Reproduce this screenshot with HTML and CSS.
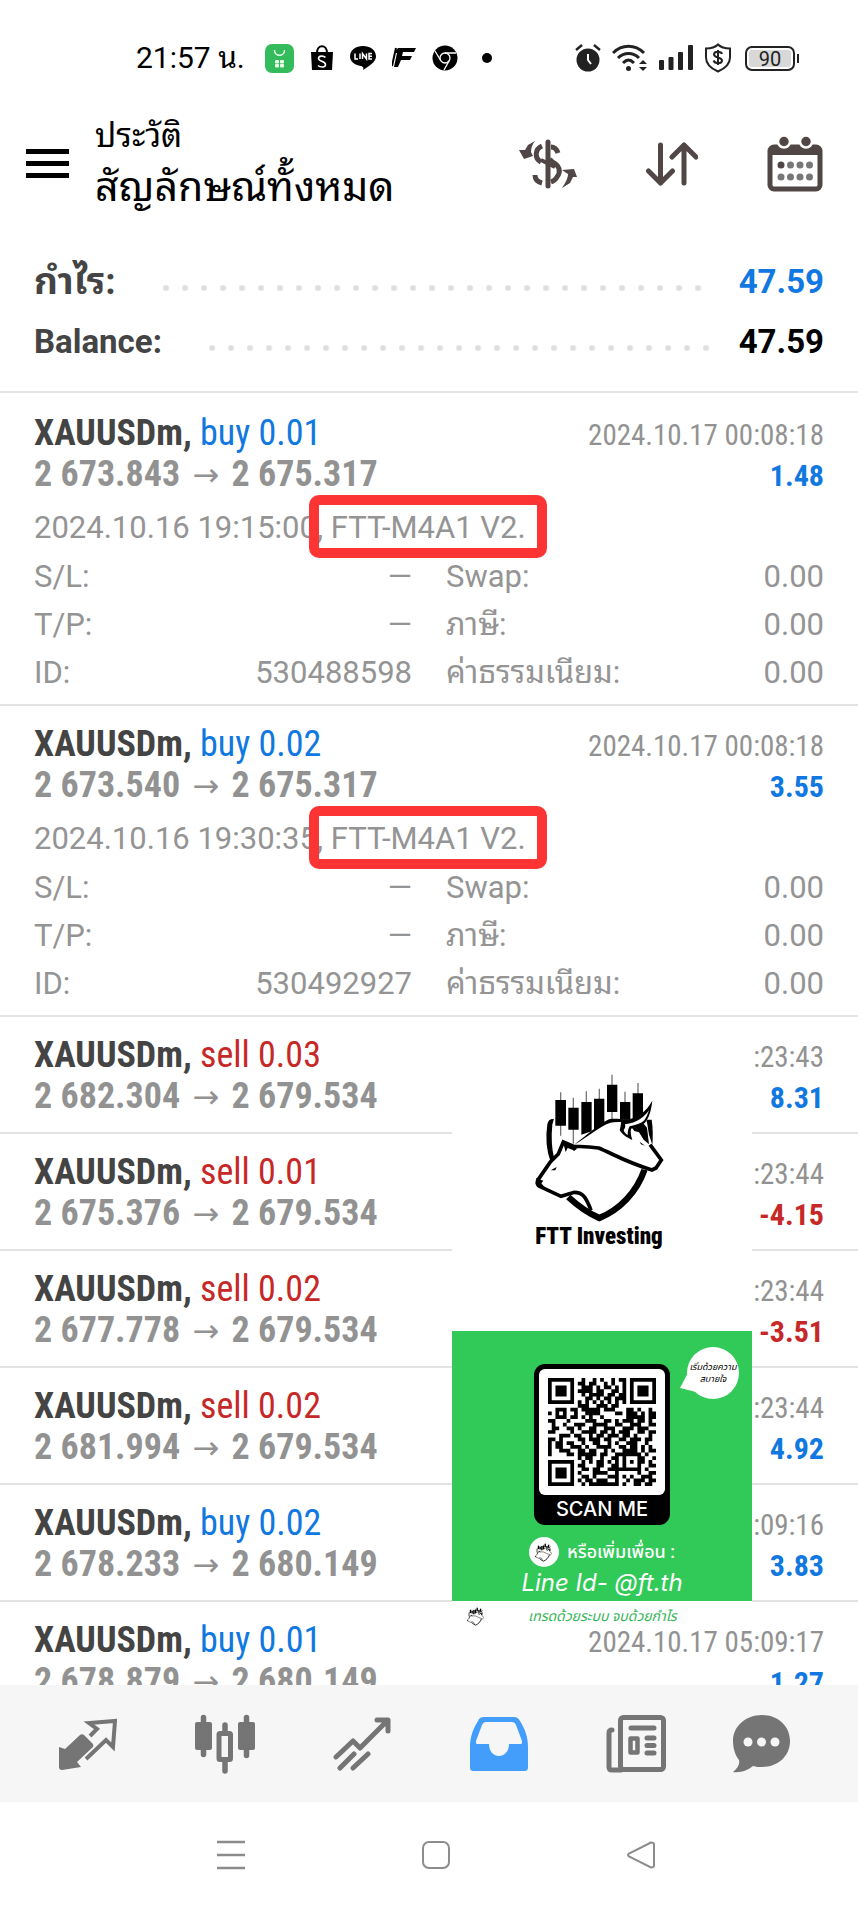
FILE: index.html
```html
<!DOCTYPE html>
<html lang="th">
<head>
<meta charset="utf-8">
<meta name="viewport" content="width=device-width, initial-scale=1">
<title>ประวัติ</title>
<link rel="stylesheet" href="styles.css">
</head>
<body>
<svg class="defs" aria-hidden="true">
  <symbol id="mark" viewBox="285 160 390 450">
    <g stroke="#777" stroke-width="4"><path d="M365 218V348M403 234V372M442 215V250M481 207V240M519 165V300M558 216V250M597 190V225"/></g>
    <path d="M349 241h32v77h-32zM388 264h31v66h-31zM427 247h31v88l-31 10zM465 237h31v75l-31 22zM504 195h31v82h-31zM543 247h31v60h-31zM581 221h31v70l-31 20z"/>
    <path d="M342 300c-10 0-13 4-15 14-6 40-3 78 10 112l7-8c-8-30-10-64-6-104z" stroke="#000" stroke-width="4"/>
    <path d="M622 300h16c4 25 4 52 2 80l-10-15c0-20-2-40-8-65z"/>
    <path d="M388 532c32 30 58 48 93 63 60-24 112-76 136-146" fill="none" stroke="#000" stroke-width="19"/>
    <path d="M405 376C445 348 480 316 512 302c18-5 42 0 62-3 30-6 50-28 66-56-5 34-10 52-22 66l20 60 32 52-10 26-22 8c-60-10-110-34-158-64-24-8-46-6-75-15z" fill="#fff"/>
    <path d="M405 376C445 346 480 312 510 299c18-4 40 1 50 0l-6 8c-16 0-28-1-40 2-30 10-70 44-109 67z"/>
    <path d="M560 299c34 0 62-24 80-56-4 32-10 52-22 66-12 12-28 14-42 18-2 10 0 22 4 34-18-8-32-18-38-30 2-8 4-14 4-28zM558 314c2 8 0 12-4 18 2 6 6 10 12 14 0-10 2-20 6-26 18-4 34-8 44-18 6-8 10-18 14-30-14 20-36 38-72 42z" fill-rule="evenodd"/>
    <path d="M580 326l34-14 10 12 6 50-16-14-14-22-14-4zM602 366l16 12-12-4z"/>
    <path d="M405 381c30-2 48 0 74 4 40 16 80 42 160 66l12-6 16-24-34-46" fill="none" stroke="#000" stroke-width="11"/>
    <path d="M296 482l38-55 24-24 15-36 28 12 8 12M296 482c-4 10 2 16 6 18l64 30 40-12c24 0 34 12 50 54" fill="none" stroke="#000" stroke-width="11"/>
    <path d="M372 367c12 4 24 10 36 26l-22-8-6 12zM335 452l18-10-4 10zM291 475l22 8-6 8 10 12-22-6z"/>
  </symbol>
</svg>

<header class="statusbar">
  <span class="clock">21:57 น.</span>
  <div class="status-left">
    <svg width="29" height="29" viewBox="0 0 29 29"><rect width="29" height="29" rx="7" fill="#34bb5c"/><path d="M9.500 6c0 7 10 7 10 0" fill="none" stroke="#e8ffe8" stroke-width="1.500"/><g fill="#e8ffe8"><rect x="10" y="16" width="4" height="3.500" rx="1"/><rect x="15" y="16" width="4" height="3.500" rx="1"/><rect x="10" y="20" width="4" height="3.500" rx="1"/><rect x="15" y="20" width="4" height="3.500" rx="1"/></g></svg>
    <svg width="24" height="26" viewBox="0 0 24 26"><path d="M1 7h22l-1 18H2z"/><path d="M7 8c0-9 10-9 10 0" fill="none" stroke="#000" stroke-width="2"/><path d="M15.500 12.500c-2-2-7-2-7 1s7 2.500 7 6-5.500 3-7.500 1" fill="none" stroke="#fff" stroke-width="1.600"/></svg>
    <svg width="26" height="26" viewBox="0 0 26 26"><path d="M13 1c7 0 13 4 13 10.500C26 17 19 21 13 25c1-3 0-3-2-4C4 20 0 16 0 11.500 0 5 6 1 13 1z"/><path d="M5 8.500V14h3M10 8.500V14M12.500 14V8.500l4 5.500V8.500M22 8.500h-3V14h3M19 11.200h3" fill="none" stroke="#fff" stroke-width="1.500"/></svg>
    <svg width="24" height="22" viewBox="0 0 24 22"><path d="M6 1h18l-2 4H11l-1 4h10l-2 4H9L6 20H2L5 6h-3z"/><path d="M4 1L0 19" stroke="#000" stroke-width="2"/></svg>
    <svg width="26" height="26" viewBox="0 0 26 26"><circle cx="13" cy="13" r="12.500"/><circle cx="13" cy="13" r="5" fill="none" stroke="#fff" stroke-width="1.300"/><path d="M13 8h11M8.700 15.500L3 6M17.300 15.500L12 25" stroke="#fff" stroke-width="1.300"/></svg>
    <svg class="dot" width="10" height="10" viewBox="0 0 10 10"><circle cx="5" cy="5" r="5"/></svg>
  </div>
  <div class="status-right">
    <svg width="26" height="28" viewBox="0 0 26 28" fill="#222"><circle cx="13" cy="16" r="11.500"/><path d="M1 6l6-5M25 6l-6-5" stroke="#222" stroke-width="2.400"/><path d="M13 10v6l3 4" fill="none" stroke="#fff" stroke-width="2"/></svg>
    <svg width="36" height="28" viewBox="0 0 36 28" fill="none" stroke="#222" stroke-width="3"><path d="M1 9c9-9 22-9 31 0M6 14c6-6 15-6 21 0M11 19c4-4 7-4 11 0"/><circle cx="16.500" cy="24.500" r="2.500" fill="#222" stroke="none"/><path d="M27 20l4-4 4 4zM27 23l4 4 4-4z" fill="#222" stroke="none"/></svg>
    <svg width="34" height="26" viewBox="0 0 34 26" fill="#222"><rect y="15" width="5" height="10" rx="1"/><rect x="9.500" y="12" width="5" height="13" rx="1"/><rect x="19" y="7" width="5" height="18" rx="1"/><rect x="29" y="0" width="5" height="25" rx="1"/></svg>
    <svg width="28" height="30" viewBox="0 0 28 30" fill="none" stroke="#222" stroke-width="2"><path d="M14 1.500c3 3 7 4 12 4v9c0 7-5 11-12 14-7-3-12-7-12-14v-9c5 0 9-1 12-4z"/><path d="M18 11c-1-3-8-3-8 .5s8 2.500 8 6-7 3.500-8.500 0M14 7v15"/></svg>
    <span class="battery">90</span>
  </div>
</header>

<header class="appbar">
  <button class="icon-btn" aria-label="เมนู"><svg width="43" height="30" viewBox="0 0 43 30"><path d="M0 2.500h43M0 14.500h43M0 26.500h43" stroke="#000" stroke-width="5"/></svg></button>
  <div class="titles">
    <p class="subtitle">ประวัติ</p>
    <h1 class="title">สัญลักษณ์ทั้งหมด</h1>
  </div>
  <div class="actions">
    <button class="icon-btn" aria-label="สกุลเงิน"><svg width="58" height="50" viewBox="0 0 58 50"><path d="M29 3v44" stroke="#4f4645" stroke-width="5" stroke-linecap="round"/><path d="M23 7c-7 3-8 12-1 16M23 44c-4-1-7-3-7-8M32 8c4 0 6 3 7 6M33 23c8 3 9 10 5 15-1 2-3 4-6 5" fill="none" stroke="#4f4645" stroke-width="5"/><path d="M22 21l14 7M31 20l7 7" stroke="#4f4645" stroke-width="4"/><path d="M16 2L9 6 6 11 0 11l5 9 9-3-2-4c0-4 1-7 4-11zM43 49l8-5 3-6 4 0-3-8-12 1 6 4c0 5-3 9-6 14z" fill="#4f4645"/></svg></button>
    <button class="icon-btn" aria-label="เรียงลำดับ"><svg width="52" height="44" viewBox="0 0 52 44" fill="none" stroke="#4f4645" stroke-width="5" stroke-linecap="round" stroke-linejoin="round"><path d="M14.500 3v38M2.500 29l12 12 12-12M38 41V3M26 15L38 3l12 12"/></svg></button>
    <button class="icon-btn" aria-label="ปฏิทิน"><svg width="56" height="56" viewBox="0 0 56 56"><rect x="3" y="11" width="50" height="42" rx="4" fill="none" stroke="#4f4645" stroke-width="5"/><path d="M3 11h50v8H3z" fill="#4f4645"/><g fill="#4f4645" stroke="#fff" stroke-width="2.500"><circle cx="17" cy="5.500" r="6"/><circle cx="39" cy="5.500" r="6"/></g><g fill="#777"><circle cx="14" cy="29" r="3.500" fill="#4f4645"/><circle cx="23.500" cy="29" r="3.500"/><circle cx="33" cy="29" r="3.500"/><circle cx="42.500" cy="29" r="3.500"/><circle cx="14" cy="41" r="3.500"/><circle cx="23.500" cy="41" r="3.500"/><circle cx="33" cy="41" r="3.500"/><circle cx="42.500" cy="41" r="3.500"/></g></svg></button>
  </div>
</header>

<dl class="summary">
  <div class="summary-row"><dt class="thai">กำไร:</dt><dd class="up">47.59</dd></div>
  <div class="summary-row"><dt>Balance:</dt><dd>47.59</dd></div>
</dl>

<main class="history">
  <ul class="records">
    <li class="record detailed">
      <div class="line"><span class="symbol">XAUUSDm, <b class="up">buy 0.01</b></span><time>2024.10.17 00:08:18</time></div>
      <div class="line"><span class="price">2 673.843 <i>→</i> 2 675.317</span><span class="profit up">1.48</span></div>
      <p class="comment">2024.10.16 19:15:00, <span class="marked">FTT-M4A1 V2.</span></p>
      <dl class="details">
        <div><dt>S/L:</dt><dd>—</dd></div><div><dt>Swap:</dt><dd>0.00</dd></div>
        <div><dt>T/P:</dt><dd>—</dd></div><div><dt>ภาษี:</dt><dd>0.00</dd></div>
        <div><dt>ID:</dt><dd>530488598</dd></div><div><dt>ค่าธรรมเนียม:</dt><dd>0.00</dd></div>
      </dl>
    </li>
    <li class="record detailed">
      <div class="line"><span class="symbol">XAUUSDm, <b class="up">buy 0.02</b></span><time>2024.10.17 00:08:18</time></div>
      <div class="line"><span class="price">2 673.540 <i>→</i> 2 675.317</span><span class="profit up">3.55</span></div>
      <p class="comment">2024.10.16 19:30:35, <span class="marked">FTT-M4A1 V2.</span></p>
      <dl class="details">
        <div><dt>S/L:</dt><dd>—</dd></div><div><dt>Swap:</dt><dd>0.00</dd></div>
        <div><dt>T/P:</dt><dd>—</dd></div><div><dt>ภาษี:</dt><dd>0.00</dd></div>
        <div><dt>ID:</dt><dd>530492927</dd></div><div><dt>ค่าธรรมเนียม:</dt><dd>0.00</dd></div>
      </dl>
    </li>
    <li class="record">
      <div class="line"><span class="symbol">XAUUSDm, <b class="down">sell 0.03</b></span><time>:23:43</time></div>
      <div class="line"><span class="price">2 682.304 <i>→</i> 2 679.534</span><span class="profit up">8.31</span></div>
    </li>
    <li class="record">
      <div class="line"><span class="symbol">XAUUSDm, <b class="down">sell 0.01</b></span><time>:23:44</time></div>
      <div class="line"><span class="price">2 675.376 <i>→</i> 2 679.534</span><span class="profit down">-4.15</span></div>
    </li>
    <li class="record">
      <div class="line"><span class="symbol">XAUUSDm, <b class="down">sell 0.02</b></span><time>:23:44</time></div>
      <div class="line"><span class="price">2 677.778 <i>→</i> 2 679.534</span><span class="profit down">-3.51</span></div>
    </li>
    <li class="record">
      <div class="line"><span class="symbol">XAUUSDm, <b class="down">sell 0.02</b></span><time>:23:44</time></div>
      <div class="line"><span class="price">2 681.994 <i>→</i> 2 679.534</span><span class="profit up">4.92</span></div>
    </li>
    <li class="record">
      <div class="line"><span class="symbol">XAUUSDm, <b class="up">buy 0.02</b></span><time>:09:16</time></div>
      <div class="line"><span class="price">2 678.233 <i>→</i> 2 680.149</span><span class="profit up">3.83</span></div>
    </li>
    <li class="record">
      <div class="line"><span class="symbol">XAUUSDm, <b class="up">buy 0.01</b></span><time>2024.10.17 05:09:17</time></div>
      <div class="line"><span class="price">2 678.879 <i>→</i> 2 680.149</span><span class="profit up">1.27</span></div>
    </li>
  </ul>

  <aside class="promo">
    <div class="brand">
      <svg width="130" height="150"><use href="#mark"/></svg>
      <p class="brand-name">FTT Investing</p>
    </div>
    <div class="card">
      <p class="bubble">เริ่มด้วยความ<br>สบายใจ<svg width="16" height="22" viewBox="0 0 16 22"><path d="M9 0L0 17l16 4z" fill="#fff"/></svg></p>
      <div class="scan">
        <div class="qr-box"><svg class="qr" id="qr" width="108" height="108" viewBox="0 0 29 29" role="img" aria-label="QR code"></svg></div>
        <p class="scan-label">SCAN ME</p>
      </div>
      <p class="add"><span class="avatar"><svg width="17" height="20"><use href="#mark"/></svg></span>หรือเพิ่มเพื่อน :</p>
      <p class="line-id">Line Id- @ft.th</p>
    </div>
    <div class="slogan"><svg width="17" height="20"><use href="#mark"/></svg><p>เทรดด้วยระบบ จบด้วยกำไร</p></div>
  </aside>
</main>

<nav class="tabs">
  <button class="icon-btn" aria-label="Quotes"><svg width="58" height="52" viewBox="0 0 58 52"><path d="M0 29v20c0 2 1 3 3 3l19-3-4-5 16-15c1-2 0-3-1-4l-8-8c-1-1-3-1-4 0L6 31z" fill="#757575"/><path d="M31 18l7-7-8-6L56 3l-2 26-7-7-20 19" fill="none" stroke="#757575" stroke-width="4"/></svg></button>
  <button class="icon-btn" aria-label="Chart"><svg width="60" height="60" viewBox="0 0 60 60" fill="#757575"><rect y="8" width="17" height="28" rx="2"/><rect x="43" y="8" width="17" height="28" rx="2"/><path d="M8.500 3.500v37M51.500 3.500v38M30 11v8M30 46v11" stroke="#757575" stroke-width="5.500" stroke-linecap="round"/><rect x="24" y="19.500" width="11.500" height="26" rx="1" fill="#f6f6f6" stroke="#757575" stroke-width="5"/></svg></button>
  <button class="icon-btn" aria-label="Trade"><svg width="58" height="54" viewBox="0 0 58 54" fill="none" stroke="#757575" stroke-width="5" stroke-linecap="round" stroke-linejoin="round"><path d="M3 40l17-16 7 7L54 4M44 3h11v11M7 51l14-14M20 51l15-14"/></svg></button>
  <button class="icon-btn" aria-label="History"><svg width="58" height="54" viewBox="0 0 58 54"><path fill-rule="evenodd" d="M14 0h30c3 0 4 1 6 4 5 8 8 16 8 26v20c0 3-1 4-4 4H4c-3 0-4-1-4-4V30C0 20 3 12 8 4c1-3 3-4 6-4zM16 5c-2 0-3 1-4 3L6 24c0 2 0 3 1 3h12c0 16 20 16 20 0h12c1 0 1-1 1-3L46 8c-1-2-2-3-4-3z" fill="#429dfb"/></svg></button>
  <button class="icon-btn" aria-label="News"><svg width="60" height="58" viewBox="0 0 60 58" fill="none" stroke="#757575" stroke-width="5" stroke-linecap="round" stroke-linejoin="round"><rect x="14.500" y="2.500" width="43" height="52" rx="3"/><path d="M15 55H6c-2 0-3-1-3-3V18c0-2 1-3 3-3M25 13h23M41 23h7M41 30.500h7M41 38h7"/><rect x="24.500" y="23.500" width="7" height="14" stroke-width="4.500"/></svg></button>
  <button class="icon-btn" aria-label="Messages"><svg width="58" height="58" viewBox="0 0 58 58"><path d="M29 0c16 0 28 11 28 26S45 52 29 52c-3 0-6 0-9-1-5 4-12 7-20 6 5-4 7-8 6-12C2 40 0 33 0 26 0 11 13 0 29 0z" fill="#757575"/><g fill="#f6f6f6"><circle cx="15" cy="27" r="4.500"/><circle cx="28.500" cy="27" r="4.500"/><circle cx="42" cy="27" r="4.500"/></g></svg></button>
</nav>

<nav class="sysnav">
  <button class="icon-btn" aria-label="Recent"><svg width="28" height="30" viewBox="0 0 28 30"><path d="M0 2h28M0 15h28M0 28h28" stroke="#8c8c8c" stroke-width="2.400"/></svg></button>
  <button class="icon-btn" aria-label="Home"><svg width="28" height="30" viewBox="0 0 28 30"><rect x="1" y="2" width="26" height="26" rx="6" fill="none" stroke="#8c8c8c" stroke-width="2"/></svg></button>
  <button class="icon-btn" aria-label="Back"><svg width="28" height="30" viewBox="0 0 28 30"><path d="M24 2.500L2 13.500q-2 1.500 0 3l22 11q3 0 3-2v-21q0-2-3-2z" fill="none" stroke="#8c8c8c" stroke-width="2"/></svg></button>
</nav>
<script src="qr.js"></script>
</body>
</html>
```

FILE: styles.css
```css
* { box-sizing: border-box; margin: 0; padding: 0; }

body {
  display: flex;
  flex-direction: column;
  height: 100vh;
  overflow: hidden;
  background: #fff;
  color: #000;
  font-family: Roboto, "Noto Sans Thai Looped", "Noto Looped Thai", "Noto Sans Thai", "Noto Sans", "Liberation Sans", sans-serif;
}

svg { display: block; flex: none; }
ul { list-style: none; }
.defs { position: absolute; width: 0; height: 0; }
.icon-btn { border: 0; background: none; }
.up { color: #1078e0; }
.down { color: #c62828; }

.statusbar {
  display: flex;
  align-items: center;
  flex: none;
  height: 116px;
  padding: 0 59px 0 136px;
}
.clock { width: 129px; font-size: 30px; line-height: 36px; white-space: nowrap; }
.status-left, .status-right { display: flex; align-items: center; gap: 16px; }
.dot { margin-left: 8px; }
.status-right { gap: 11px; margin-left: auto; }
.battery {
  position: relative;
  width: 50px;
  height: 25px;
  margin: 0 4px 0 2px;
  border: 2px solid #222;
  border-radius: 7px;
  background: #d8d8d8;
  box-shadow: inset 0 0 0 2px #fff;
  color: #222;
  font-size: 20px;
  line-height: 22px;
  text-align: center;
}
.battery::after {
  content: "";
  position: absolute;
  top: 6px;
  right: -6px;
  width: 2px;
  height: 9px;
  background: #222;
}

.appbar { display: flex; align-items: center; flex: none; height: 95px; padding: 0 35px 0 26px; }
.titles { margin-left: 26px; white-space: nowrap; }
.subtitle { font-size: 33px; line-height: 46px; }
.title { font-size: 41px; font-weight: 400; line-height: 56px; }
.actions { display: flex; align-items: center; gap: 69px; margin-left: auto; }

.summary {
  flex: none;
  padding: 41px 34px 19px;
  border-bottom: 2px solid #e2e2e2;
}
.summary-row {
  display: flex;
  align-items: center;
  height: 60px;
  font-size: 33px;
  font-weight: 700;
  line-height: 40px;
}
.summary dt { color: #444; }
.summary .thai { font-size: 37px; }
.summary-row::before {
  content: "";
  order: 1;
  flex: 1;
  height: 6px;
  margin: 12px 28px 0 47px;
  background: radial-gradient(circle at 3px 3px, #dedede 2px, transparent 4px) 0 0 / 19px 6px repeat-x;
}
.summary dd { order: 2; }

.history { position: relative; flex: 1; min-height: 0; overflow: hidden; }
.records { padding-top: 2px; }
.record { padding: 15px 34px 18px; border-bottom: 2px solid #e2e2e2; }
.record.detailed { padding-bottom: 7px; }
.line {
  display: flex;
  justify-content: space-between;
  align-items: baseline;
  height: 41px;
  font-family: "Roboto Condensed", "Liberation Sans Narrow", Roboto, sans-serif;
  line-height: 46px;
  white-space: nowrap;
}
.symbol { color: #444; font-size: 36px; font-weight: 700; }
.symbol b { font-weight: 400; }
.line time { color: #929292; font-size: 29px; }
.price { color: #929292; font-size: 36px; font-weight: 700; }
.price i { margin: 0 4px; font-family: "DejaVu Sans", sans-serif; font-size: 32px; font-style: normal; font-weight: 400; line-height: 30px; }
.profit { font-size: 30px; font-weight: 700; }

.comment { margin-top: 16px; color: #949494; font-size: 31px; line-height: 40px; white-space: nowrap; }
.marked { position: relative; }
.marked::after {
  content: "";
  position: absolute;
  inset: -14px -21px -12px -22px;
  border: 10px solid #fd3434;
  border-radius: 10px;
}
.details {
  display: grid;
  grid-template-columns: 1fr 1fr;
  column-gap: 34px;
  padding-top: 5px;
  color: #949494;
  font-size: 31px;
  line-height: 48px;
}
.details div { display: flex; justify-content: space-between; height: 48px; white-space: nowrap; }

.promo {
  position: absolute;
  top: 625px;
  right: 106px;
  width: 300px;
  background: #fff;
  font-family: Roboto, "Noto Sans Thai", "Noto Sans", sans-serif;
}
.brand { display: flex; flex-direction: column; align-items: center; height: 313px; padding: 55px 6px 0 0; }
.brand-name {
  font-family: "Roboto Condensed", "Liberation Sans Narrow", Roboto, sans-serif;
  font-size: 23px;
  font-weight: 900;
  line-height: 28px;
  white-space: nowrap;
}
.card {
  position: relative;
  display: flex;
  flex-direction: column;
  align-items: center;
  height: 270px;
  padding-top: 33px;
  background: #31c957;
  color: #fff;
}
.bubble {
  position: absolute;
  top: 16px;
  right: 13px;
  width: 52px;
  height: 52px;
  padding-top: 14px;
  border-radius: 50%;
  background: #fff;
  color: #000;
  font-size: 9px;
  font-style: italic;
  line-height: 12px;
  text-align: center;
  white-space: nowrap;
}
.bubble svg { position: absolute; left: -7px; top: 24px; }
.scan { width: 136px; height: 161px; padding: 5px; border-radius: 11px; background: #000; }
.qr-box { padding: 9px; border-radius: 6px; background: #fff; }
.scan-label { font-family: Inter, sans-serif; font-size: 20px; font-weight: 500; line-height: 28px; text-align: center; }
.add { display: flex; align-items: center; gap: 8px; margin-top: 12px; font-size: 18px; font-weight: 500; line-height: 30px; white-space: nowrap; }
.avatar { display: grid; place-items: center; width: 30px; height: 30px; border-radius: 50%; background: #fff; }
.line-id { font-family: Inter, sans-serif; font-size: 24px; font-style: italic; line-height: 32px; white-space: nowrap; }
.slogan {
  display: flex;
  align-items: center;
  gap: 44px;
  height: 30px;
  padding-left: 15px;
  color: #35b457;
  font-size: 14px;
  font-style: italic;
  line-height: 24px;
  white-space: nowrap;
}

.tabs {
  display: grid;
  grid-template-columns: repeat(5, 137fr) 115fr;
  place-items: center;
  flex: none;
  height: 117px;
  padding: 0 39px 0 19px;
  background: #f6f6f6;
}
.sysnav { display: flex; justify-content: center; align-items: center; flex: none; gap: 177px; height: 105px; padding-left: 14px; }
```

FILE: qr.js
```js
const rows = [
  "#######..#..#.#..#.##.#######",
  "#.....#.##.##..#.#..#.#.....#",
  "#.###.#..###.#.##.#.#.#.###.#",
  "#.###.#.####.##..##.#.#.###.#",
  "#.###.#..#.####.##.##.#.###.#",
  "#.....#...##.#.##.###.#.....#",
  "#######.#.#.#.#.#.#.#.#######",
  "........###..###.##..........",
  "..###.##.#####.###...##.#..#.",
  "#.#.#..#..####....##.###.#.##",
  "..###.##.#.#..#......#####.##",
  "##...#....###..##.#.###.##.#.",
  ".#..#..###..####..##..###..##",
  ".##..##.#..##..###..###.###..",
  "##....#..####.##.#.###..##.##",
  "...###.##..#.##.###.##.#...#.",
  "##.#....##.###.##..##.###.##.",
  "#.##.##..#..##..#.#..###..#..",
  "#.##..###.#..####..##.##.#.#.",
  "#..###..##.##..#.#..####.#.##",
  "#....##.#####.##..#######.#..",
  "........#.##..#..##.#...##..#",
  "#######..#.#.##.#.#.#.#.##.#.",
  "#.....#.##...##..##.#...#..##",
  "#.###.#..##.##..#########.#..",
  "#.###.#.#...####..#.....#..##",
  "#.###.#..##.#...###.#.#..###.",
  "#.....#.#.##.###..#..#.###.##",
  "#######..#.########.#..##.##."
];

const d = rows
  .map((row, y) => [...row].map((c, x) => (c === "#" ? `M${x} ${y}h1v1h-1z` : "")).join(""))
  .join("");
const path = document.createElementNS("http://www.w3.org/2000/svg", "path");
path.setAttribute("d", d);
document.getElementById("qr").appendChild(path);
```
